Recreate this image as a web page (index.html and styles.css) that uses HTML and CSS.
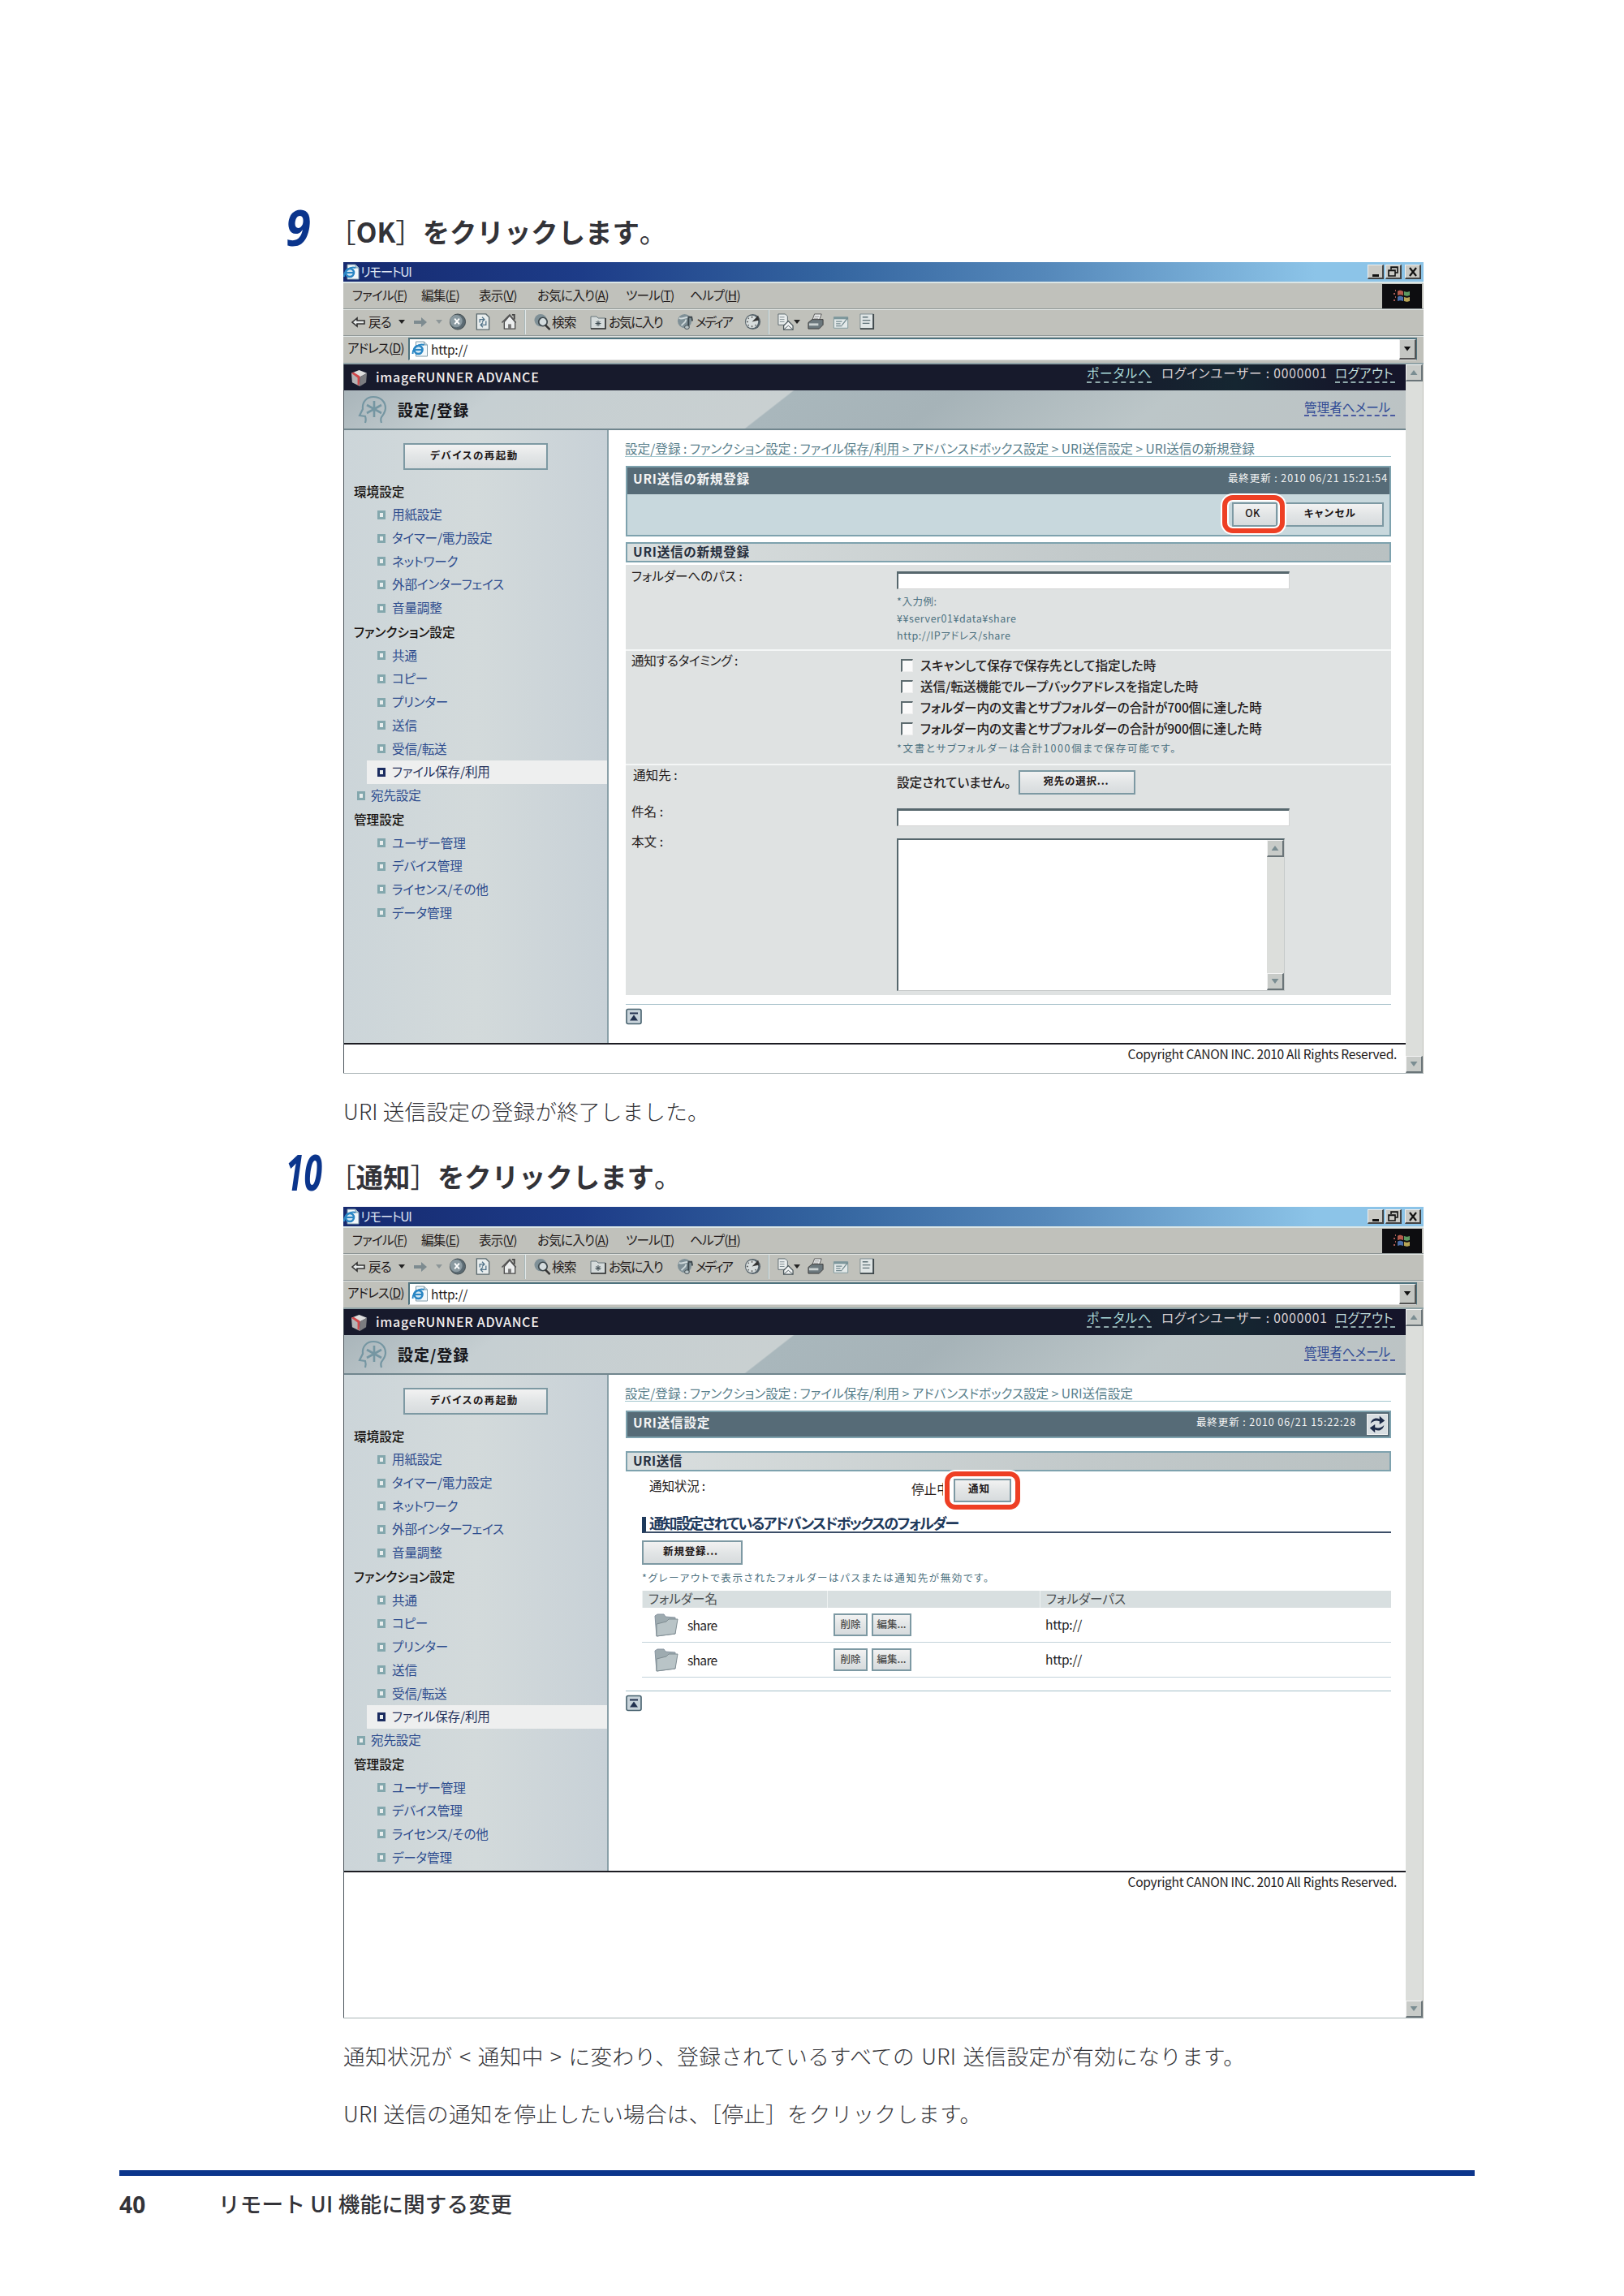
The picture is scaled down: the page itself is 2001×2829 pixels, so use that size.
FILE: index.html
```
<!DOCTYPE html>
<html lang="ja">
<head>
    <meta charset="UTF-8">
    <title>リモート UI 機能に関する変更</title>
    <link rel="stylesheet" href="styles.css">
</head>
<body>

    <!-- Shared icons -->
    <svg class="sprite" width="0" height="0">
        <symbol id="ie" viewBox="0 0 20 20">
            <path d="M5 1h10l4 4v14H5z" fill="#f2f8fb" stroke="#7f9aa8"/>
            <path d="M15 1v4h4" fill="#b9d3e2" stroke="#7f9aa8"/>
            <circle cx="8" cy="11" r="5" fill="#cfe6f4" stroke="#2a86c4" stroke-width="2.6"/>
            <path d="M4 11h9M1 16C1 9 8 3 15 5" fill="none" stroke="#2a86c4" stroke-width="2"/>
        </symbol>
        <symbol id="back" viewBox="0 0 18 14"><path d="M1 7l6-5v3h9v4H7v3z" fill="#e8ecec" stroke="#333" stroke-width="1.6"/></symbol>
        <symbol id="forward" viewBox="0 0 18 14"><path d="M17 7l-7-6v4H1v4h9v4z" fill="#7d8b90"/></symbol>
        <symbol id="stop" viewBox="0 0 22 22">
            <circle cx="11" cy="11" r="10" fill="#5b6a72" stroke="#3e484e"/>
            <circle cx="9" cy="10" r="8" fill="#8b9aa1"/>
            <path d="M7 7l6 7M13 7l-6 7" stroke="#fff" stroke-width="2"/>
        </symbol>
        <symbol id="reload" viewBox="0 0 20 22">
            <path d="M2 1h12l4 4v16H2z" fill="#e8eded" stroke="#5c6b70" stroke-width="1.4"/>
            <path d="M6 12V8h5M14 10v5H8M9 5l3 3-3 3M10 12l-3 3 3 3" fill="none" stroke="#53748a" stroke-width="1.4"/>
        </symbol>
        <symbol id="home" viewBox="0 0 22 22">
            <path d="M14 2h3v6" fill="none" stroke="#444" stroke-width="2"/>
            <path d="M4 11v9h14v-9l-7-8z" fill="#eceeee" stroke="#4a4a4a" stroke-width="1.4"/>
            <path d="M1 12L11 2l8 10" fill="none" stroke="#555" stroke-width="1.6"/>
            <path d="M9 20v-6h4v6" fill="#777"/>
        </symbol>
        <symbol id="search" viewBox="0 0 22 22">
            <circle cx="9" cy="9" r="8" fill="#7f9097"/>
            <circle cx="12" cy="11" r="5.5" fill="#d4dcde" stroke="#3d484d" stroke-width="1.8"/>
            <path d="M15 15l6 6" stroke="#333" stroke-width="2.6"/>
        </symbol>
        <symbol id="fav" viewBox="0 0 20 20">
            <path d="M1 3h7l2 2h9v13H1z" fill="#d5dbdb" stroke="#66757b"/>
            <path d="M19 5v13H1" fill="none" stroke="#333" stroke-width="1.6"/>
            <path d="M10 8v7M6.500 11.500h7M7.500 9l5 5M12.500 9l-5 5" stroke="#3c4a50"/>
        </symbol>
        <symbol id="media" viewBox="0 0 22 22">
            <circle cx="10" cy="10" r="9" fill="#7f9097"/>
            <path d="M3 6c4 3 9-3 13 0M6 16c2-4 5-3 6-8" fill="none" stroke="#cfd9db" stroke-width="2"/>
            <path d="M15 18V5h4l1 5" fill="none" stroke="#3a454b" stroke-width="2"/>
            <ellipse cx="13" cy="18" rx="3" ry="2.500" fill="#b9c4c7" stroke="#3a454b"/>
        </symbol>
        <symbol id="history" viewBox="0 0 22 22">
            <circle cx="11" cy="11" r="10" fill="#55626a"/>
            <circle cx="10" cy="11" r="8" fill="#d7dddd"/>
            <path d="M10 11l8-8 1 6z" fill="#333"/>
            <path d="M10 4v2M3 11h2M10 18v-2M5 6l1 1M5 16l1-1M15 16l-1-1" stroke="#555" stroke-width="1.500"/>
        </symbol>
        <symbol id="mail" viewBox="0 0 22 22">
            <path d="M2 1h9l3 3v11H2z" fill="#e9eded" stroke="#5b686d"/>
            <path d="M4 5h6M4 8h6M4 11h6" stroke="#7d8b90"/>
            <path d="M9 21v-5l6-6 6 6v5z" fill="#f2f4f4" stroke="#4a565b" stroke-width="1.300"/>
            <path d="M9 21l6-5 6 5" fill="none" stroke="#4a565b"/>
        </symbol>
        <symbol id="print" viewBox="0 0 22 22">
            <path d="M6 9l3-8h9l-3 8z" fill="#f4f6f6" stroke="#555"/>
            <path d="M9 4h6M8 6.500h6" stroke="#888"/>
            <path d="M1 12l5-4h14v7l-5 5H1z" fill="#6c787d" stroke="#3a3a3a"/>
            <path d="M2 13h12v3H2z" fill="#cbd2d2"/>
        </symbol>
        <symbol id="edit" viewBox="0 0 22 22">
            <path d="M1 4h19v15H1z" fill="#e3e9e9" stroke="#7d979c"/>
            <path d="M1 4h19v3H1z" fill="#7d979c"/>
            <path d="M4 10h8M4 13h6M4 16h8M20 5l-8 10" fill="none" stroke="#73898f" stroke-width="1.400"/>
        </symbol>
        <symbol id="doc" viewBox="0 0 22 22">
            <path d="M2 1h17v19H2z" fill="#dfe5e5" stroke="#7c8b8f"/>
            <path d="M19 1v19H2" fill="none" stroke="#3f484b" stroke-width="2"/>
            <path d="M5 5h7M5 9h10M5 13h9" stroke="#5f7379" stroke-width="1.400"/>
        </symbol>
        <symbol id="winlogo" viewBox="0 0 24 20">
            <path d="M3 3h1M1 7h2M3 11h1M1 15h2" stroke="#a85a55" stroke-width="2"/>
            <path d="M6 4c3-2 4-1 7 0v5c-3-1-4-1-7 0z" fill="#b35a4c"/>
            <path d="M14 4c3 1 4 1 7 0v5c-3 1-4 1-7 0z" fill="#5d9a62"/>
            <path d="M6 11c3-2 4-1 7 0v5c-3-1-4-1-7 0z" fill="#4a6ea8"/>
            <path d="M14 11c3 1 4 1 7 0v5c-3 1-4 1-7 0z" fill="#b8a555"/>
        </symbol>
        <symbol id="cube" viewBox="0 0 22 22">
            <path d="M1 5l10-4 10 4-9 5z" fill="#dedede"/>
            <path d="M1 5l11 5v12L2 17z" fill="#b5b3b5"/>
            <path d="M21 5l-9 5v12l8-5z" fill="#7b7c80"/>
            <path d="M1 5l3-1 8 5-1 12-2-1V11z" fill="#d2474a"/>
        </symbol>
        <symbol id="head" viewBox="0 0 36 36">
            <path d="M9 34c1-3 1-5 0-8l-7-1 4-8C5 8 11 2 19 2c9 0 15 6 15 14 0 5-3 8-5 11-1 2-1 4 0 7" fill="none" stroke="#7596a2" stroke-width="2.200"/>
            <path d="M20 7v20M11 12l18 10M29 12L11 22" stroke="#7596a2" stroke-width="2.600"/>
        </symbol>
        <symbol id="folder" viewBox="0 0 30 29">
            <path d="M1 3l3-2h8l2 3 12 1v20L3 28z" fill="#9eabb0" stroke="#8794a0"/>
            <path d="M3 28V13l12-3 3-3h11l-3 18z" fill="#b9c4c7" stroke="#7f8c92"/>
        </symbol>
        <symbol id="refresh" viewBox="0 0 26 26">
            <path d="M4 12c1-6 7-9 12-6V2l7 6-7 5V9C11 7 7 9 4 12z" fill="#1c2a48"/>
            <path d="M22 14c-1 6-7 9-12 6v4l-7-6 7-5v4c5 2 9 0 12-3z" fill="#1c2a48"/>
        </symbol>
        <symbol id="top" viewBox="0 0 20 20">
            <rect x="1" y="1" width="18" height="18" rx="2" fill="#c8d3da" stroke="#46616e" stroke-width="1.600"/>
            <path d="M5 5h10v2H5zM10 8l5 7H5z" fill="#22314f"/>
        </symbol>
    </svg>

    <div class="page">

        <!-- Step 9 -->
        <h2 class="step"><span class="num">9</span><span class="open">［</span>OK<span class="close">］</span>をクリックします<span class="close">。</span></h2>

        <div class="window">
            <div class="titlebar">
                <svg width="20" height="20"><use href="#ie"/></svg>
                <span class="caption">リモートUI</span>
                <div class="winbtns">
                    <span class="min"></span>
                    <span><svg width="13" height="13" viewBox="0 0 13 13"><path d="M4 4V1h8v7H9M4 1.500h8M1 5h8v7H1zM1 5.500h8" fill="none" stroke="#111" stroke-width="1.600"/></svg></span>
                    <span><svg width="12" height="12" viewBox="0 0 12 12"><path d="M2 1l8 10M10 1L2 11" stroke="#111" stroke-width="2.200"/></svg></span>
                </div>
            </div>
            <div class="menubar">
                <span class="m1">ファイル(<u>F</u>)</span><span class="m2">編集(<u>E</u>)</span><span class="m3">表示(<u>V</u>)</span><span class="m4">お気に入り(<u>A</u>)</span><span class="m5">ツール(<u>T</u>)</span><span class="m6">ヘルプ(<u>H</u>)</span>
                <div class="logo"><svg width="24" height="20"><use href="#winlogo"/></svg></div>
            </div>
            <div class="toolbar">
                <svg class="t-back" width="18" height="14"><use href="#back"/></svg>
                <span class="w-back">戻る</span><i class="arrow"></i>
                <svg class="t-fwd" width="18" height="14"><use href="#forward"/></svg><i class="arrow dim"></i>
                <svg class="t-stop" width="22" height="21"><use href="#stop"/></svg>
                <svg class="t-reload" width="20" height="21"><use href="#reload"/></svg>
                <svg class="t-home" width="22" height="21"><use href="#home"/></svg>
                <b class="sep"></b>
                <svg class="t-search" width="22" height="21"><use href="#search"/></svg><span class="w-search">検索</span>
                <svg class="t-fav" width="20" height="20"><use href="#fav"/></svg><span class="w-fav">お気に入り</span>
                <svg class="t-media" width="21" height="21"><use href="#media"/></svg><span class="w-media">メディア</span>
                <svg class="t-history" width="21" height="21"><use href="#history"/></svg>
                <b class="sep"></b>
                <svg class="t-mail" width="21" height="21"><use href="#mail"/></svg><i class="arrow near"></i>
                <svg class="t-print" width="21" height="21"><use href="#print"/></svg>
                <svg class="t-edit" width="21" height="20"><use href="#edit"/></svg>
                <svg class="t-doc" width="21" height="21"><use href="#doc"/></svg>
            </div>
            <div class="address">
                <span class="label">アドレス(<u>D</u>)</span>
                <div class="url"><svg width="21" height="20"><use href="#ie"/></svg><span>http://</span><i class="drop"></i></div>
            </div>

            <div class="viewport">
                <div class="site">
                    <div class="brand">
                        <svg width="21" height="21"><use href="#cube"/></svg>
                        <span class="product">imageRUNNER ADVANCE</span>
                        <span class="session"><a class="portal">ポータルへ</a><span class="user">ログインユーザー : 0000001</span><a class="logout">ログアウト</a></span>
                    </div>
                    <div class="apphead">
                        <svg width="36" height="36"><use href="#head"/></svg>
                        <span class="appname">設定/登録</span>
                        <a class="admin">管理者へメール</a>
                    </div>
                    <div class="columns">
                        <div class="sidebar">
                            <div class="btn restart">デバイスの再起動</div>
                            <h4>環境設定</h4>
                            <ul>
                                <li>用紙設定</li>
                                <li>タイマー/電力設定</li>
                                <li>ネットワーク</li>
                                <li>外部インターフェイス</li>
                                <li>音量調整</li>
                            </ul>
                            <h4>ファンクション設定</h4>
                            <ul>
                                <li>共通</li>
                                <li>コピー</li>
                                <li>プリンター</li>
                                <li>送信</li>
                                <li>受信/転送</li>
                                <li class="active">ファイル保存/利用</li>
                                <li class="outer">宛先設定</li>
                            </ul>
                            <h4>管理設定</h4>
                            <ul>
                                <li>ユーザー管理</li>
                                <li>デバイス管理</li>
                                <li>ライセンス/その他</li>
                                <li>データ管理</li>
                            </ul>
                        </div>
                        <div class="content">
                            <div class="crumbs">設定/登録 : ファンクション設定 : ファイル保存/利用 &gt; アドバンスドボックス設定 &gt; URI送信設定 &gt; URI送信の新規登録</div>
                            <div class="panel">
                                <div class="panel-title"><span>URI送信の新規登録</span><span class="updated">最終更新 : 2010 06/21 15:21:54</span></div>
                                <div class="panel-body">
                                    <div class="btn ok marked">OK</div>
                                    <div class="btn cancel">キャンセル</div>
                                </div>
                            </div>
                            <div class="section">URI送信の新規登録</div>
                            <div class="form">
                                <div class="row row-path">
                                    <label>フォルダーへのパス :</label>
                                    <div>
                                        <div class="input"></div>
                                        <p class="hint">*入力例:<br>¥¥server01¥data¥share<br>http://IPアドレス/share</p>
                                    </div>
                                </div>
                                <div class="row row-timing">
                                    <label>通知するタイミング :</label>
                                    <div>
                                        <div class="check"><i></i>スキャンして保存で保存先として指定した時</div>
                                        <div class="check"><i></i>送信/転送機能でループバックアドレスを指定した時</div>
                                        <div class="check"><i></i>フォルダー内の文書とサブフォルダーの合計が700個に達した時</div>
                                        <div class="check"><i></i>フォルダー内の文書とサブフォルダーの合計が900個に達した時</div>
                                        <p class="hint wide">*文書とサブフォルダーは合計1000個まで保存可能です。</p>
                                    </div>
                                </div>
                                <div class="row row-dest">
                                    <label>通知先 :</label>
                                    <div class="dest"><span>設定されていません。</span><div class="btn choose">宛先の選択...</div></div>
                                </div>
                                <div class="row row-subject">
                                    <label>件名 :</label>
                                    <div><div class="input"></div></div>
                                </div>
                                <div class="row row-text">
                                    <label>本文 :</label>
                                    <div><div class="textarea"><div class="scroll"><i class="up"></i><i class="down"></i></div></div></div>
                                </div>
                            </div>
                            <div class="totop"><svg width="20" height="21"><use href="#top"/></svg></div>
                        </div>
                    </div>
                    <div class="copyright">Copyright CANON INC. 2010 All Rights Reserved.</div>
                </div>
                <div class="scroll"><i class="up"></i><i class="down"></i></div>
            </div>
        </div>

        <p class="note">URI 送信設定の登録が終了しました。</p>

        <!-- Step 10 -->
        <h2 class="step second"><span class="num ten">10</span><span class="open">［</span>通知<span class="close">］</span>をクリックします<span class="close">。</span></h2>

        <div class="window">
            <div class="titlebar">
                <svg width="20" height="20"><use href="#ie"/></svg>
                <span class="caption">リモートUI</span>
                <div class="winbtns">
                    <span class="min"></span>
                    <span><svg width="13" height="13" viewBox="0 0 13 13"><path d="M4 4V1h8v7H9M4 1.500h8M1 5h8v7H1zM1 5.500h8" fill="none" stroke="#111" stroke-width="1.600"/></svg></span>
                    <span><svg width="12" height="12" viewBox="0 0 12 12"><path d="M2 1l8 10M10 1L2 11" stroke="#111" stroke-width="2.200"/></svg></span>
                </div>
            </div>
            <div class="menubar">
                <span class="m1">ファイル(<u>F</u>)</span><span class="m2">編集(<u>E</u>)</span><span class="m3">表示(<u>V</u>)</span><span class="m4">お気に入り(<u>A</u>)</span><span class="m5">ツール(<u>T</u>)</span><span class="m6">ヘルプ(<u>H</u>)</span>
                <div class="logo"><svg width="24" height="20"><use href="#winlogo"/></svg></div>
            </div>
            <div class="toolbar">
                <svg class="t-back" width="18" height="14"><use href="#back"/></svg>
                <span class="w-back">戻る</span><i class="arrow"></i>
                <svg class="t-fwd" width="18" height="14"><use href="#forward"/></svg><i class="arrow dim"></i>
                <svg class="t-stop" width="22" height="21"><use href="#stop"/></svg>
                <svg class="t-reload" width="20" height="21"><use href="#reload"/></svg>
                <svg class="t-home" width="22" height="21"><use href="#home"/></svg>
                <b class="sep"></b>
                <svg class="t-search" width="22" height="21"><use href="#search"/></svg><span class="w-search">検索</span>
                <svg class="t-fav" width="20" height="20"><use href="#fav"/></svg><span class="w-fav">お気に入り</span>
                <svg class="t-media" width="21" height="21"><use href="#media"/></svg><span class="w-media">メディア</span>
                <svg class="t-history" width="21" height="21"><use href="#history"/></svg>
                <b class="sep"></b>
                <svg class="t-mail" width="21" height="21"><use href="#mail"/></svg><i class="arrow near"></i>
                <svg class="t-print" width="21" height="21"><use href="#print"/></svg>
                <svg class="t-edit" width="21" height="20"><use href="#edit"/></svg>
                <svg class="t-doc" width="21" height="21"><use href="#doc"/></svg>
            </div>
            <div class="address">
                <span class="label">アドレス(<u>D</u>)</span>
                <div class="url"><svg width="21" height="20"><use href="#ie"/></svg><span>http://</span><i class="drop"></i></div>
            </div>

            <div class="viewport">
                <div class="site">
                    <div class="brand">
                        <svg width="21" height="21"><use href="#cube"/></svg>
                        <span class="product">imageRUNNER ADVANCE</span>
                        <span class="session"><a class="portal">ポータルへ</a><span class="user">ログインユーザー : 0000001</span><a class="logout">ログアウト</a></span>
                    </div>
                    <div class="apphead">
                        <svg width="36" height="36"><use href="#head"/></svg>
                        <span class="appname">設定/登録</span>
                        <a class="admin">管理者へメール</a>
                    </div>
                    <div class="columns short">
                        <div class="sidebar">
                            <div class="btn restart">デバイスの再起動</div>
                            <h4>環境設定</h4>
                            <ul>
                                <li>用紙設定</li>
                                <li>タイマー/電力設定</li>
                                <li>ネットワーク</li>
                                <li>外部インターフェイス</li>
                                <li>音量調整</li>
                            </ul>
                            <h4>ファンクション設定</h4>
                            <ul>
                                <li>共通</li>
                                <li>コピー</li>
                                <li>プリンター</li>
                                <li>送信</li>
                                <li>受信/転送</li>
                                <li class="active">ファイル保存/利用</li>
                                <li class="outer">宛先設定</li>
                            </ul>
                            <h4>管理設定</h4>
                            <ul>
                                <li>ユーザー管理</li>
                                <li>デバイス管理</li>
                                <li>ライセンス/その他</li>
                                <li>データ管理</li>
                            </ul>
                        </div>
                        <div class="content">
                            <div class="crumbs">設定/登録 : ファンクション設定 : ファイル保存/利用 &gt; アドバンスドボックス設定 &gt; URI送信設定</div>
                            <div class="panel alone">
                                <div class="panel-title"><span>URI送信設定</span><span class="updated">最終更新 : 2010 06/21 15:22:28</span><div class="refresh"><svg width="24" height="24"><use href="#refresh"/></svg></div></div>
                            </div>
                            <div class="section spaced">URI送信</div>
                            <div class="status">
                                <span class="status-label">通知状況 :</span>
                                <span class="status-value">停止中</span>
                                <div class="btn notify marked">通知</div>
                            </div>
                            <h3>通知設定されているアドバンスドボックスのフォルダー</h3>
                            <div class="btn create">新規登録...</div>
                            <p class="hint gray">*グレーアウトで表示されたフォルダーはパスまたは通知先が無効です。</p>
                            <div class="table">
                                <div class="thead"><span>フォルダー名</span><span></span><span>フォルダーパス</span></div>
                                <div class="trow">
                                    <span class="name"><svg width="30" height="29"><use href="#folder"/></svg>share</span>
                                    <span class="acts"><span class="btn del">削除</span><span class="btn mod">編集...</span></span>
                                    <span>http://</span>
                                </div>
                                <div class="trow">
                                    <span class="name"><svg width="30" height="29"><use href="#folder"/></svg>share</span>
                                    <span class="acts"><span class="btn del">削除</span><span class="btn mod">編集...</span></span>
                                    <span>http://</span>
                                </div>
                            </div>
                            <div class="totop far"><svg width="20" height="21"><use href="#top"/></svg></div>
                        </div>
                    </div>
                    <div class="copyright">Copyright CANON INC. 2010 All Rights Reserved.</div>
                </div>
                <div class="scroll"><i class="up"></i><i class="down"></i></div>
            </div>
        </div>

        <p class="note spread">通知状況が &lt; 通知中 &gt; に変わり、登録されているすべての URI 送信設定が有効になります。</p>
        <p class="note last">URI 送信の通知を停止したい場合は、<span class="open">［</span>停止］をクリックします。</p>
    </div>

    <div class="footer"><span class="pageno">40</span><span>リモート UI 機能に関する変更</span></div>

</body>
</html>
```
FILE: styles.css
```
*,
*::before,
*::after {
    box-sizing: border-box;
}
body {
    margin: 0;
    background: #fff;
    color: #333338;
    font-family: "Open Sans", "Noto Sans CJK JP", sans-serif;
    height: 2829px;
    overflow: hidden;
}
h2, h3, h4, p, ul {
    margin: 0;
    padding: 0;
    font-weight: normal;
    list-style: none;
}
svg {
    display: block;
    flex: none;
}
.sprite {
    position: absolute;
}
.page {
    padding: 247px 0 0 423px;
    height: 2674px;
}

/* Manual text */
.step {
    display: flex;
    align-items: center;
    height: 76px;
    font-size: 33.4px;
    font-weight: 700;
    white-space: pre;
    font-family: "Noto Sans CJK JP", sans-serif;
    line-height: 40px;
}
.step.second {
    margin-top: 22px;
}
.step .num {
    width: 71px;
    height: 71px;
    margin-left: -71px;
    font: italic 700 60px/60px "Open Sans", sans-serif;
    color: #0b358c;
    transform: scaleX(0.93);
    transform-origin: left;
}
.step .num.ten {
    transform: scaleX(0.68);
}
.open {
    font-feature-settings: "halt";
}
.step .open,
.step .close {
    font-weight: 400;
}
.step .open {
    margin-left: -1px;
}
.note {
    height: 40px;
    margin-top: 26px;
    font: 300 26.6px/40px "Noto Sans CJK JP", sans-serif;
    letter-spacing: 0.2px;
    white-space: nowrap;
}
.note.spread {
    letter-spacing: 0.35px;
    word-spacing: 2px;
}
.note.last {
    margin-top: 31px;
    letter-spacing: 0.3px;
}
.footer {
    display: flex;
    align-items: center;
    width: 1670px;
    height: 75px;
    margin-left: 147px;
    border-top: 7px solid #0b358c;
    font: 500 26.6px/40px "Noto Sans CJK JP", sans-serif;
    letter-spacing: 0.2px;
}
.footer .pageno {
    width: 122px;
    padding-top: 2px;
    font: 700 28px/40px "Open Sans", sans-serif;
}

/* Browser window */
.window {
    width: 1331px;
    height: 1000px;
    display: flex;
    flex-direction: column;
    border-bottom: 1px solid #a9b4b6;
    background: #c0c1bb;
    color: #241c1c;
    font: 400 15.6px/20px "Noto Sans CJK JP", sans-serif;
    font-feature-settings: "palt";
    white-space: nowrap;
}
.titlebar {
    flex: none;
    display: flex;
    align-items: center;
    height: 24px;
    padding-right: 3px;
    background: linear-gradient(90deg, #162a70, #1d3c88 22%, #3465a0 45%, #5588ba 65%, #8cc4e8 90%);
    color: #dfe6f2;
}
.titlebar .caption {
    margin: -2px 0 0 1px;
    letter-spacing: -1.4px;
}
.winbtns {
    display: flex;
    margin-left: auto;
    gap: 2px;
}
.winbtns span {
    display: flex;
    align-items: center;
    justify-content: center;
    width: 20px;
    height: 18px;
    background: #c9c9c4;
    border: 1px solid #eee;
    border-right: 2px solid #444;
    border-bottom: 2px solid #444;
}
.winbtns span:last-child {
    margin-left: 2px;
}
.winbtns .min::after {
    content: "";
    width: 8px;
    height: 3px;
    margin-top: 9px;
    background: #111;
}
.menubar {
    flex: none;
    display: flex;
    align-items: center;
    height: 34px;
    padding-left: 11px;
    border-top: 2px solid #dbe6e6;
    border-bottom: 1px solid #8e9696;
    letter-spacing: -0.8px;
    line-height: 16px;
}
.menubar > span {
    padding-bottom: 3px;
}
.m1 { width: 85px; }
.m2 { width: 71px; }
.m3 { width: 72px; }
.m4 { width: 109px; }
.m5 { width: 79px; }
.menubar .logo {
    display: flex;
    align-items: center;
    justify-content: center;
    width: 49px;
    height: 30px;
    margin-left: auto;
    margin-right: 2px;
    background: #0d0d10;
}
.toolbar {
    flex: none;
    display: flex;
    align-items: center;
    height: 33px;
    padding: 0 0 2px 10px;
    border-top: 1px solid #e4e8e6;
    border-bottom: 1px solid #8e9696;
    letter-spacing: -0.8px;
    line-height: 16px;
}
.toolbar span {
    padding-bottom: 2px;
}
.toolbar .arrow {
    width: 8px;
    height: 5px;
    margin-right: 10px;
    background: #222;
    clip-path: polygon(0 0, 100% 0, 50% 100%);
}
.toolbar .dim {
    background: #8d9698;
    margin-left: 10px;
    margin-right: 8px;
}
.toolbar .near {
    margin-right: 9px;
}
.toolbar .sep {
    width: 2px;
    height: 30px;
    background: #a9b9bb;
    border-right: 1px solid #e0e6e6;
}
.t-back { margin-right: 3px; }
.w-back { width: 37px; }
.t-reload { margin: 0 12px 0 10px; }
.t-home { margin-right: 7px; }
.t-search { margin: 0 1px 0 9px; }
.w-search { width: 47px; }
.t-fav { margin-right: 3px; }
.w-fav { width: 84px; letter-spacing: -1.6px; }
.t-media { margin-right: 2px; }
.w-media { width: 60px; letter-spacing: -2.3px; }
.t-history { margin-right: 8px; }
.t-mail { margin-left: 9px; }
.t-print { margin-right: 10px; }
.t-edit { margin-right: 11px; }
.address {
    flex: none;
    display: flex;
    align-items: center;
    height: 35px;
    padding: 0 8px 3px 6px;
    border-top: 1px solid #dfe4e4;
    border-bottom: 2px solid #8fa2a6;
}
.address .label {
    width: 75px;
    margin: -3px 0 0 -1px;
    letter-spacing: -0.9px;
}
.address .url {
    flex: 1;
    display: flex;
    align-items: center;
    height: 28px;
    padding-left: 2px;
    background: #fff;
    border: 2px solid #4f7480;
    border-right-width: 1px;
    border-bottom: 1px solid #ddd;
}
.address .url span {
    margin: -1px 0 0 3px;
    letter-spacing: -0.3px;
}
.drop {
    display: flex;
    align-items: center;
    justify-content: center;
    width: 21px;
    height: 25px;
    margin-left: auto;
    background: #c4c6c2;
    border: 1px solid #eee;
    border-right: 2px solid #555;
    border-bottom: 2px solid #555;
}
.drop::after {
    content: "";
    width: 9px;
    height: 6px;
    background: #111;
    clip-path: polygon(0 0, 100% 0, 50% 100%);
}
.viewport {
    flex: 1;
    display: flex;
    min-height: 0;
    padding-right: 1px;
}
.site {
    flex: 1;
    display: flex;
    flex-direction: column;
    border-left: 1px solid #4c555c;
    background: #fff;
}
.scroll {
    display: flex;
    flex-direction: column;
    justify-content: space-between;
    width: 21px;
    background: #dcdedb;
}
.scroll i {
    display: flex;
    align-items: center;
    justify-content: center;
    height: 21px;
    background: #c8cbc8;
    border: 1px solid #f4f4f4;
    border-right: 2px solid #6a7478;
    border-bottom: 2px solid #6a7478;
}
.scroll i::after {
    content: "";
    width: 9px;
    height: 6px;
    background: #7a8d92;
    clip-path: polygon(0 0, 100% 0, 50% 100%);
}
.scroll .up::after {
    clip-path: polygon(50% 0, 100% 100%, 0 100%);
}

/* Remote UI header */
.brand {
    flex: none;
    display: flex;
    align-items: center;
    height: 32px;
    padding: 0 13px 0 8px;
    background: linear-gradient(90deg, #171a2c 70%, #152631 84%, #15152a 96%);
    color: #f3eeee;
}
.product {
    margin: -2px 0 0 10px;
    font-size: 16px;
    font-weight: 500;
    letter-spacing: 0.7px;
}
.session {
    display: flex;
    margin: -7px 0 0 auto;
    line-height: 16px;
}
.session a {
    height: 21px;
    border-bottom: 2px dashed #8fa9ab;
    color: #a9dcdc;
    letter-spacing: 0.4px;
}
.session .portal {
    width: 80px;
    margin-right: 12px;
    letter-spacing: 1.2px;
}
.session .user {
    width: 214px;
    color: #d8d0d4;
    letter-spacing: 0.85px;
}
.session .logout {
    width: 74px;
    color: #c0dcdc;
}
.apphead {
    flex: none;
    display: flex;
    align-items: center;
    height: 49px;
    padding: 0 13px 0 17px;
    border-bottom: 2px solid #71868e;
    background: linear-gradient(142deg, #a9b5ba, #c6cfd2 14%, #c9d0d1 40.4%, #a9b7bc 40.6%, #a6b3b8 55%, #bcc6c8 75%, #bcc3c4);
}
.appname {
    margin-left: 13px;
    font-size: 19px;
    font-weight: 700;
    letter-spacing: 1px;
    color: #15151a;
}
.admin {
    width: 112px;
    height: 22px;
    margin: -6px 0 0 auto;
    border-bottom: 2px dashed #4a5aa0;
    color: #2f4a94;
}
.columns {
    flex: none;
    display: flex;
    height: 757px;
    border-bottom: 2px solid #1c1c22;
}
.columns.short {
    height: 613px;
}
.copyright {
    padding: 1px 11px 0 0;
    text-align: right;
    letter-spacing: -0.32px;
}

/* Menu */
.sidebar {
    width: 326px;
    background: linear-gradient(90deg, #ccd5d9, #d3dadb 50%, #c8d1d7);
    border-right: 2px solid #8aa0a8;
    padding-top: 16px;
}
.btn {
    display: flex;
    align-items: center;
    justify-content: center;
    height: 30px;
    border: 2px solid #7d99a3;
    background: linear-gradient(#f2f2f2, #e2e5e6 50%, #d7dbdd);
    color: #1d1616;
    font-size: 12.5px;
    font-weight: 700;
    line-height: 16px;
}
.restart {
    width: 178px;
    height: 33px;
    margin: 0 0 14px 73px;
    padding: 0 3px 4px 0;
    letter-spacing: 1.5px;
}
.sidebar h4 {
    height: 27px;
    margin-top: 3px;
    padding-left: 12px;
    font-weight: 500;
    line-height: 25px;
    color: #17120f;
}
.sidebar li {
    display: flex;
    align-items: center;
    height: 28.7px;
    margin-left: 28px;
    padding: 0 0 2px 13px;
    color: #2d4c8e;
    letter-spacing: -0.2px;
}
.sidebar li::before {
    content: "";
    width: 10px;
    height: 11px;
    margin: 2px 8px 0 0;
    border: 3px solid #83a7ad;
    background: #e9eeee;
}
.sidebar .active {
    background: #eeefef;
    color: #25325c;
}
.sidebar .active::before {
    border-color: #1b2c60;
}
.sidebar .outer {
    margin-left: 3px;
    padding-top: 1px;
}
.sidebar .outer::before {
    margin-right: 7px;
}

/* Content */
.content {
    flex: 1;
    padding: 13px 18px 0 21px;
    background: #fff;
}
.crumbs {
    height: 20px;
    margin-left: -1px;
    border-bottom: 1px solid #a3c6ce;
    color: #59808c;
    line-height: 19px;
}
.panel {
    margin-top: 11px;
    border: 2px solid #7ea2ae;
    background: #c8d8dd;
}
.panel-title {
    display: flex;
    align-items: center;
    height: 33px;
    padding: 0 2px 8px 7px;
    background: #566b77;
    color: #f4f4f4;
    font-weight: 700;
    letter-spacing: 0.75px;
}
.panel.alone .panel-title {
    height: 30px;
    padding-bottom: 6px;
}
.updated {
    margin-left: auto;
    font-size: 12.5px;
    font-weight: 400;
    letter-spacing: 0.9px;
}
.refresh {
    margin: 6px 0 0 13px;
    background: #d8dee2;
    border: 1px solid #f0f0f0;
}
.panel-body {
    display: flex;
    justify-content: flex-end;
    height: 50px;
    padding: 10px 7px 0;
}
.ok {
    width: 56px;
    margin-right: 7px;
    padding: 0 5px 5px 0;
    font-weight: 500;
    letter-spacing: 0.5px;
}
.cancel {
    width: 124px;
    padding: 0 8px 5px 0;
    letter-spacing: 1.4px;
}
.marked {
    position: relative;
}
.marked::before,
.marked::after {
    content: "";
    position: absolute;
    inset: -11px -13px;
    border: 6px solid #ee3f24;
    border-radius: 13px;
}
.marked::before {
    inset: -13px -15px;
    border: 10px solid #fff;
    border-radius: 15px;
}
.ok.marked::after {
    inset: -11px -11px -10px -14px;
}
.ok.marked::before {
    inset: -13px -13px -12px -16px;
}
.section {
    height: 25px;
    margin-top: 7px;
    padding-left: 7px;
    border: 2px solid #7ea2ae;
    background: linear-gradient(90deg, #dadfdf, #c2c9ca 60%, #b9c1c2);
    color: #27303f;
    font-weight: 700;
    letter-spacing: 0.75px;
    line-height: 18px;
}
.section.spaced {
    margin-top: 16px;
    letter-spacing: 0.4px;
}
.form {
    height: 530px;
    margin-top: 3px;
    background: #dfe2e2;
    color: #241c1c;
}
.row {
    display: grid;
    grid-template-columns: 327px 1fr;
    padding-left: 7px;
}
.row-path {
    height: 106px;
    padding-top: 8px;
    border-bottom: 2px solid #f4f6f6;
}
.row label {
    margin-top: -5px;
}
.input {
    width: 484px;
    height: 22px;
    background: #fff;
    border: 1px solid #d5d5d5;
    border-top: 3px solid #56676d;
    border-left: 2px solid #56676d;
}
.hint {
    margin-top: 4px;
    font-size: 12.5px;
    line-height: 21px;
    letter-spacing: 0.55px;
    color: #4d7180;
}
.row-timing {
    height: 141px;
    padding-top: 4px;
    border-bottom: 2px solid #f4f6f6;
}
.row-timing label {
    margin-top: -3px;
    letter-spacing: -0.4px;
}
.check {
    display: flex;
    align-items: center;
    height: 25.9px;
    padding-left: 5px;
    font-weight: 500;
}
.check i {
    width: 15px;
    height: 16px;
    margin: 3px 9px 0 0;
    background: #fafafa;
    border: 1px solid #eee;
    border-top: 2px solid #5c6a6e;
    border-left: 2px solid #5c6a6e;
}
.hint.wide {
    margin-top: 1px;
    letter-spacing: 1.65px;
}
.row-dest {
    height: 53px;
    padding-top: 5px;
}
.row-dest label {
    margin: -4px 0 0 2px;
}
.dest {
    display: flex;
    align-items: center;
    height: 32px;
}
.dest > span {
    width: 150px;
    padding-bottom: 2px;
    font-weight: 500;
    letter-spacing: 0;
}
.choose {
    width: 144px;
    padding: 0 2px 5px 0;
    letter-spacing: 0.8px;
}
.row-subject {
    height: 37px;
}
.row-subject label {
    margin-top: -7px;
}
.row-text label {
    margin-top: -7px;
}
.row-text .textarea {
    display: flex;
    justify-content: flex-end;
    width: 478px;
    height: 188px;
    background: #fff;
    border: 1px solid #c5c9c9;
    border-top: 2px solid #56676d;
    border-left: 2px solid #56676d;
}
.totop {
    margin-top: 11px;
    padding-top: 4px;
    border-top: 1px solid #a3bec8;
}
.totop.far {
    margin-top: 16px;
}

/* Folder list */
.status {
    display: flex;
    height: 57px;
    padding: 9px 0 0 29px;
}
.status-label {
    width: 323px;
    margin-top: -2px;
    letter-spacing: -0.2px;
}
.status-value {
    width: 52px;
    margin-top: 2px;
}
.notify {
    width: 71px;
    height: 29px;
    padding: 0 8px 6px 0;
    letter-spacing: 1px;
}
.content h3 {
    height: 20px;
    margin: -1px 0 9px 20px;
    padding-left: 4px;
    border-left: 5px solid #1f3a5c;
    border-bottom: 2px solid #3c4e68;
    color: #1f3a5c;
    font-weight: 700;
    letter-spacing: -1.9px;
    line-height: 15px;
}
.create {
    width: 124px;
    margin-left: 20px;
    padding: 0 4px 5px 0;
    letter-spacing: 0.8px;
}
.hint.gray {
    margin: 5px 0 6px 20px;
    letter-spacing: 1.65px;
}
.table {
    margin-left: 20px;
}
.thead,
.trow {
    display: grid;
    grid-template-columns: 228px 262px 1fr;
    align-items: center;
}
.thead {
    height: 21px;
    background: #d8dfe0;
    color: #4b4f52;
    line-height: 18px;
}
.thead span {
    height: 21px;
    padding-left: 7px;
    border-left: 1px solid #eef2f2;
}
.trow {
    height: 43px;
    border-bottom: 1px solid #c3d3da;
    line-height: 16px;
}
.trow > span:last-child {
    padding: 0 0 3px 7px;
    letter-spacing: -0.3px;
}
.name {
    display: flex;
    align-items: center;
    gap: 11px;
    padding-left: 15px;
    letter-spacing: -0.7px;
}
.acts {
    display: flex;
    gap: 5px;
    padding-left: 8px;
}
.acts .btn {
    height: 28px;
    padding-bottom: 2px;
    color: #4b4b4b;
    font-weight: 500;
    letter-spacing: 0;
}
.del {
    width: 42px;
}
.mod {
    width: 49px;
}
```
